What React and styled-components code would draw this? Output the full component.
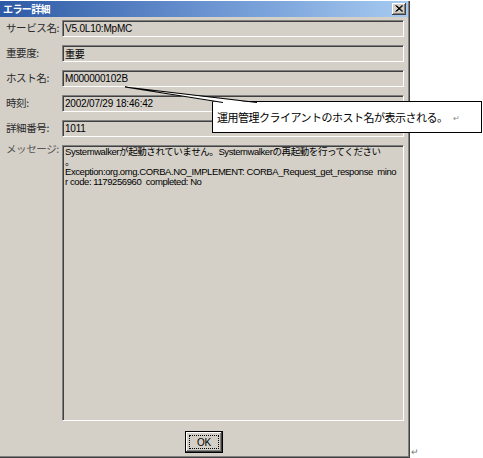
import React from 'react'
import styled, { createGlobalStyle } from 'styled-components'

const GlobalStyle = createGlobalStyle`
    html, body {
        margin: 0;
        padding: 0;
        background: #fff;
        font-family: "Liberation Sans", "Noto Sans CJK JP", sans-serif;
    }
`

const rows = [
    { label: 'サービス名:', value: 'V5.0L10:MpMC' },
    { label: '重要度:', value: '重要' },
    { label: 'ホスト名:', value: 'M000000102B' },
    { label: '時刻:', value: '2002/07/29 18:46:42' },
    { label: '詳細番号:', value: '1011' },
]

const message = [
    'Systemwalkerが起動されていません。Systemwalkerの再起動を行ってください',
    '。',
    'Exception:org.omg.CORBA.NO_IMPLEMENT: CORBA_Request_get_response  mino',
    'r code: 1179256960  completed: No',
]

const App = () => {
    return (
        <Page>
            <GlobalStyle />
            <Dialog>
                <TitleBar>
                    <Title>エラー詳細</Title>
                    <CloseButton aria-label="閉じる">
                        <svg width="8" height="7" viewBox="0 0 8 7">
                            <path d="M0.5 0.5 L7 6.5 M1.5 0.5 L8 6.5 M7 0.5 L0.5 6.5 M8 0.5 L1.5 6.5" stroke="#000" strokeWidth="1" fill="none" />
                        </svg>
                    </CloseButton>
                </TitleBar>

                <Form>
                    {rows.map(row => (
                        <React.Fragment key={row.label}>
                            <Label>{row.label}</Label>
                            <Field>{row.value}</Field>
                        </React.Fragment>
                    ))}
                    <Label $top>メッセージ:</Label>
                    <MessageBox>{message.join('\n')}</MessageBox>
                </Form>

                <Footer>
                    <OkButton>
                        <Focus>OK</Focus>
                    </OkButton>
                </Footer>
            </Dialog>
            <Mark>↵</Mark>

            <Pointer width="140" height="22" viewBox="0 0 140 22">
                <path d="M5 3 L103 19 L137 19 Z" fill="#fff" />
                <path d="M5 3 L103 18.5 M5 3 L137 18.5" stroke="#000" strokeWidth="1.2" fill="none" />
            </Pointer>
            <Callout>
                運用管理クライアントのホスト名が表示される。<small>↵</small>
            </Callout>
        </Page>
    )
}

export default App

const Page = styled.div`
    position: relative;
    width: 483px;
    height: 458px;
    display: flex;
    align-items: flex-end;
    overflow: hidden;
`

const Dialog = styled.div`
    box-sizing: border-box;
    width: 410px;
    height: 457px;
    background: #d4d0c8;
    box-shadow: inset -1px -1px #404040, inset -2px -2px #808080;
    display: flex;
    flex-direction: column;
    padding: 0 2px 2px 0;
`

const TitleBar = styled.div`
    height: 16px;
    display: flex;
    align-items: center;
    justify-content: space-between;
    padding: 0 2px 0 3px;
    background: linear-gradient(to right, #2d5aa5, #6f98d4 55%, #a6caf0);
`

const Title = styled.span`
    color: #fff;
    font-family: "Noto Sans CJK JP", sans-serif;
    font-size: 10px;
    font-weight: 700;
    letter-spacing: -0.6px;
    line-height: 1;
`

const CloseButton = styled.button`
    box-sizing: border-box;
    width: 14px;
    height: 12px;
    padding: 0;
    border: none;
    background: #d4d0c8;
    box-shadow: inset -1px -1px #404040, inset 1px 1px #fff, inset -2px -2px #808080;
    display: flex;
    align-items: center;
    justify-content: center;
    padding-bottom: 1px;
`

const Form = styled.div`
    display: grid;
    grid-template-columns: 56px 1fr;
    grid-template-rows: repeat(5, 17px) 276px;
    row-gap: 8px;
    padding: 3px 4px 0 6px;
`

const Label = styled.div`
    align-self: ${p => (p.$top ? 'start' : 'center')};
    margin-top: ${p => (p.$top ? '-1px' : '0')};
    font-family: "Noto Sans CJK JP", sans-serif;
    font-size: 10.5px;
    line-height: 1;
    color: ${p => (p.$top ? '#555' : '#2a2a2a')};
    letter-spacing: -0.4px;
    white-space: nowrap;
`

const Field = styled.div`
    box-sizing: border-box;
    height: 17px;
    display: flex;
    align-items: center;
    padding: 0 2px 1px;
    border: 1px solid;
    border-color: #808080 #fff #fff #808080;
    box-shadow: inset 1px 1px #404040;
    font-size: 10px;
    letter-spacing: -0.2px;
    color: #000;
    white-space: nowrap;
`

const MessageBox = styled(Field)`
    height: 276px;
    display: block;
    padding: 1px 1px 0 2px;
    font-size: 9.5px;
    letter-spacing: -0.42px;
    line-height: 10px;
    white-space: pre;
    overflow: hidden;
`

const Footer = styled.div`
    display: flex;
    justify-content: center;
    padding-top: 10px;
`

const OkButton = styled.button`
    box-sizing: border-box;
    width: 38px;
    height: 22px;
    padding: 3px;
    border: 1px solid #000;
    background: #d4d0c8;
    box-shadow: inset -1px -1px #404040, inset 1px 1px #fff, inset -2px -2px #808080;
`

const Focus = styled.div`
    height: 100%;
    box-sizing: border-box;
    border: 1px dotted #000;
    display: flex;
    align-items: center;
    justify-content: center;
    font-size: 10px;
    color: #000;
    letter-spacing: -0.3px;
`

const Mark = styled.span`
    font-size: 9px;
    line-height: 1;
    color: #777;
    margin: 0 0 1px 1px;
`

const Pointer = styled.svg`
    position: absolute;
    left: 120px;
    top: 84px;
    z-index: 2;
    pointer-events: none;
`

const Callout = styled.div`
    position: absolute;
    left: 212px;
    top: 101px;
    width: 270px;
    height: 32px;
    box-sizing: border-box;
    border: 1px solid #000;
    background: #fff;
    z-index: 1;
    display: flex;
    align-items: center;
    padding: 0 0 0 4px;
    font-family: "Noto Sans CJK JP", sans-serif;
    font-size: 11px;
    letter-spacing: -0.5px;
    color: #000;
    white-space: nowrap;

    small {
        font-size: 8px;
        color: #888;
        margin-left: 5px;
    }
`
